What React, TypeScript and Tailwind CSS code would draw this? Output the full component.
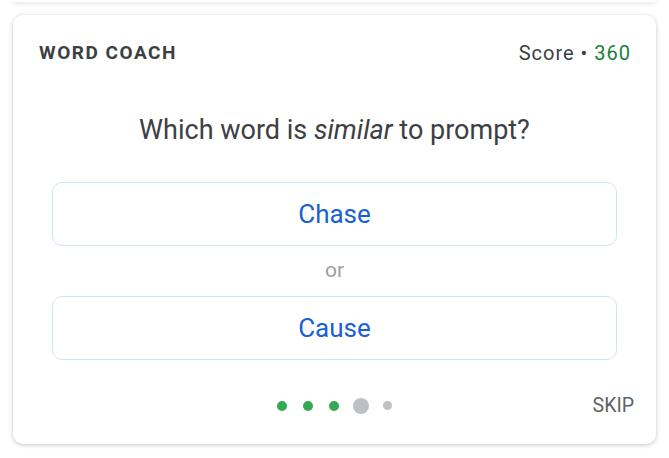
const dots = ['done', 'done', 'done', 'current', 'todo'] as const;

function Choice({ label }: { label: string }) {
    return (
        <button className="w-full h-[64px] rounded-[10px] border border-[#d2e3fc] bg-white text-[26px] text-[#1a5fd6] flex items-center justify-center">
            {label}
        </button>
    );
}

export default function App() {
    return (
        <div className="min-h-screen bg-white px-[13px]" style={{ fontFamily: 'Roboto, "Noto Sans", Arial, sans-serif' }}>
            <div className="h-[2px] rounded-b-[10px] bg-white shadow-[0_1px_4px_rgba(60,64,67,0.25)]" />
            <div className="mt-[13px] h-[429px] rounded-[10px] bg-white shadow-[0_1px_4px_rgba(60,64,67,0.3)] pt-[26px] px-[26px] flex flex-col">
                <div className="flex items-center justify-between h-[24px]">
                    <span className="text-[19px] font-bold tracking-[0.08em] text-[#3c4043]">WORD COACH</span>
                    <span className="text-[20px] tracking-[0.05em] text-[#3c4043] -mr-[1px]">
                        Score • <span className="text-[#188038]">360</span>
                    </span>
                </div>
                <div className="mt-[49px] text-center text-[27px] leading-[32px] text-[#3c4043]">
                    Which word is <i>similar</i> to prompt?
                </div>
                <div className="mt-[36px] px-[13px]">
                    <Choice label="Chase" />
                    <div className="h-[50px] flex items-center justify-center text-[21px] text-[#9aa0a6]">or</div>
                    <Choice label="Cause" />
                </div>
                <div className="mt-[31px] h-[24px] grid grid-cols-[1fr_auto_1fr] items-center">
                    <div />
                    <div className="flex items-center">
                        {dots.map((d, i) => (
                            <span
                                key={i}
                                className={
                                    d === 'done'
                                        ? 'w-[10px] h-[10px] rounded-full bg-[#34a853] mr-[16px]'
                                        : d === 'current'
                                        ? 'w-[16px] h-[16px] rounded-full bg-[#bdc1c6] ml-[-2px] mr-[14px]'
                                        : 'w-[9px] h-[9px] rounded-full bg-[#bdc1c6]'
                                }
                            />
                        ))}
                    </div>
                    <div className="text-right text-[19.5px] text-[#5f6368] -mr-[4px]">SKIP</div>
                </div>
            </div>
        </div>
    );
}
